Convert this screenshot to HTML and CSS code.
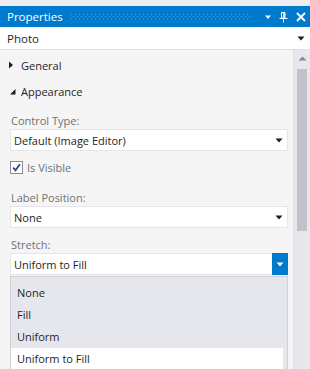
FILE: index.html
```html
<!DOCTYPE html>
<html>
<head>
<meta charset="utf-8">
<link rel="stylesheet" href="styles.css">
</head>
<body>
<div class="window">
  <div class="titlebar">
    <span class="title">Properties</span>
    <svg class="dots" height="6" width="100%"><defs><pattern id="dp" width="4" height="4" patternUnits="userSpaceOnUse"><rect x="0" y="0" width="1" height="1" fill="#49a0dc"/><rect x="2" y="2" width="1" height="1" fill="#49a0dc"/></pattern></defs><rect x="0" y="0" width="100%" height="6" fill="url(#dp)"/></svg>
    <svg class="ticon" width="8" height="6" viewBox="0 0 8 6"><path d="M1 1.5h6L4 5z" fill="#fff"/></svg>
    <svg class="ticon" width="9" height="12" viewBox="0 0 9 12"><path d="M2.5 1.5h3.5v5.5h-3.5z" fill="none" stroke="#fff" stroke-width="1"/><path d="M5 1.5v5.5" stroke="#fff" stroke-width="1.6"/><path d="M0.5 7.5h8" stroke="#fff" stroke-width="1"/><path d="M4.5 7.5v4" stroke="#fff" stroke-width="1"/></svg>
    <svg class="ticon close" width="10" height="10" viewBox="0 0 10 10"><path d="M1 1L9 9M9 1L1 9" stroke="#fff" stroke-width="1.8"/></svg>
  </div>
  <div class="objrow">
    <span class="objname">Photo</span>
    <svg class="arrow" width="8" height="5" viewBox="0 0 8 5"><path d="M0.5 0.5h7L4 4.5z" fill="#1e1e1e"/></svg>
  </div>
  <div class="main">
    <div class="content">
      <div class="cat first">
        <svg class="tri" width="6" height="8" viewBox="0 0 6 8"><path d="M1 0.5v7L5 4z" fill="#1e1e1e"/></svg>
        <span>General</span>
      </div>
      <div class="cat">
        <svg class="tri open" width="6" height="8" viewBox="0 0 6 8"><path d="M5.5 2v5.5H0z" fill="#1e1e1e"/></svg>
        <span>Appearance</span>
      </div>

      <div class="label first-label">Control Type:</div>
      <div class="combo">
        <span class="val">Default (Image Editor)</span>
        <svg class="carrow" width="8" height="5" viewBox="0 0 8 5"><path d="M0.5 0.5h7L4 4.5z" fill="#1e1e1e"/></svg>
      </div>

      <div class="check">
        <span class="box"><svg width="11" height="11" viewBox="0 0 11 11"><path d="M2.2 5.6l2.3 2.6 4.4-6" fill="none" stroke="#3b3f8f" stroke-width="1.8"/></svg></span>
        <span>Is Visible</span>
      </div>

      <div class="label lp">Label Position:</div>
      <div class="combo">
        <span class="val">None</span>
        <svg class="carrow" width="8" height="5" viewBox="0 0 8 5"><path d="M0.5 0.5h7L4 4.5z" fill="#1e1e1e"/></svg>
      </div>

      <div class="label st">Stretch:</div>
      <div class="combo active">
        <span class="val">Uniform to Fill</span>
        <span class="btn"><svg width="8" height="5" viewBox="0 0 8 5"><path d="M0.5 0.5h7L4 4.5z" fill="#fff"/></svg></span>
      </div>

      <div class="popup">
        <div class="item">None</div>
        <div class="item">Fill</div>
        <div class="item">Uniform</div>
        <div class="item sel">Uniform to Fill</div>
      </div>
    </div>
    <div class="scroll">
      <svg class="up" width="9" height="5" viewBox="0 0 9 5"><path d="M0.5 4.5h8L4.5 0.5z" fill="#868999"/></svg>
      <div class="thumb"></div>
    </div>
  </div>
</div>
</body>
</html>
```

FILE: styles.css
```css
html, body {
  margin: 0;
  padding: 0;
}
body {
  width: 310px;
  height: 369px;
  overflow: hidden;
  background: #eeeef2;
  font-family: "Open Sans", "Noto Sans", sans-serif;
  font-size: 11px;
  color: #1e1e1e;
}
.window {
  padding-top: 6px;
}
.titlebar {
  height: 21px;
  background: #007acc;
  display: flex;
  align-items: center;
  padding-left: 7px;
  padding-right: 4px;
  color: #fff;
}
.title {
  font-size: 11.5px;
  line-height: 21px;
}
.dots {
  flex: 1;
  margin: 0 7px 0 8px;
  height: 6px;
}
.ticon {
  display: block;
  margin-left: 7px;
}
.ticon.close {
  margin-left: 8px;
}
.objrow {
  height: 22px;
  background: #fff;
  border-bottom: 1px solid #e0e0e4;
  display: flex;
  align-items: center;
  padding-left: 7px;
  padding-right: 5px;
}
.objname {
  flex: 1;
  font-size: 11.5px;
}
.arrow {
  display: block;
}
.main {
  display: flex;
  background: #f5f5f5;
  height: 320px;
}
.content {
  flex: 1;
  padding: 2px 5px 0 10px;
}
.cat {
  height: 26px;
  display: flex;
  align-items: center;
}
.cat .tri {
  display: block;
  margin-left: -2px;
  margin-right: 7px;
}
.cat .tri.open {
  margin-left: 0;
  margin-right: 5px;
}
.label {
  height: 16px;
  line-height: 16px;
  padding-left: 1px;
  color: #717171;
}
.first-label {
  margin-top: 9px;
}
.lp {
  margin-top: 11px;
}
.st {
  margin-top: 9px;
}
.combo {
  height: 20px;
  background: #fff;
  border: 1px solid #e6e6e9;
  display: flex;
  align-items: center;
  padding-left: 3px;
}
.combo .val {
  flex: 1;
}
.carrow {
  display: block;
  margin-right: 4px;
}
.combo.active {
  border-color: #e6e6e9;
}
.btn {
  width: 16px;
  height: 22px;
  margin: -1px -1px -1px 0;
  background: #007acc;
  display: flex;
  align-items: center;
  justify-content: center;
}
.btn svg {
  display: block;
}
.check {
  height: 24px;
  margin-top: 4px;
  display: flex;
  align-items: center;
  color: #717171;
}
.box {
  width: 11px;
  height: 11px;
  border: 1px solid #8a8a99;
  background: #fff;
  margin-right: 4px;
  display: block;
}
.box svg {
  display: block;
}
.popup {
  margin-top: 1px;
  background: #e6e7ec;
  border: 1px solid #cfd0d6;
  border-bottom: none;
  padding: 5px 4px 0 0;
  height: 100px;
}
.item {
  height: 22px;
  line-height: 22px;
  padding-left: 6px;
}
.item.sel {
  background: #fff;
}
.scroll {
  width: 16px;
  border-left: 1px solid #e2e2e6;
  background: #e8e8ec;
  display: flex;
  flex-direction: column;
  align-items: center;
}
.up {
  display: block;
  margin-top: 6px;
}
.thumb {
  margin-top: 8px;
  width: 10px;
  height: 162px;
  background: #c2c3c9;
}
```
